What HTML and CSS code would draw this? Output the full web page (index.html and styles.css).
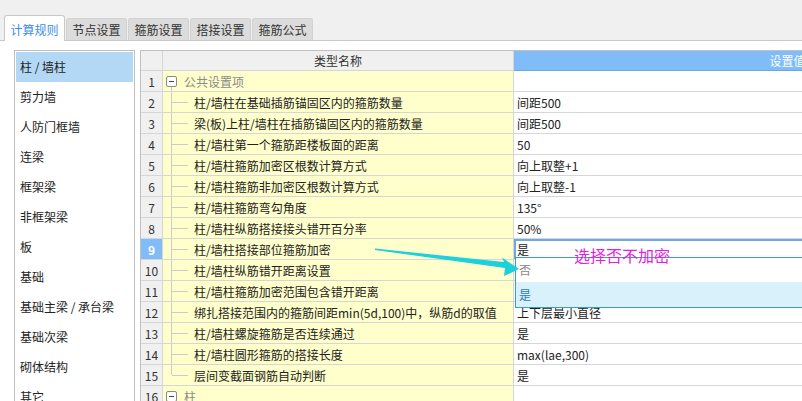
FILE: index.html
```html
<!DOCTYPE html>
<html lang="zh-CN">
<head>
<meta charset="utf-8">
<title>计算规则</title>
<link rel="stylesheet" href="styles.css">
</head>
<body>
<div class="tabs">
  <div class="tab active">计算规则</div>
  <div class="tab">节点设置</div>
  <div class="tab">箍筋设置</div>
  <div class="tab">搭接设置</div>
  <div class="tab">箍筋公式</div>
</div>
<div class="panel">
  <ul class="side">
    <li class="sel">柱 / 墙柱</li>
    <li>剪力墙</li>
    <li>人防门框墙</li>
    <li>连梁</li>
    <li>框架梁</li>
    <li>非框架梁</li>
    <li>板</li>
    <li>基础</li>
    <li>基础主梁 / 承台梁</li>
    <li>基础次梁</li>
    <li>砌体结构</li>
    <li>其它</li>
  </ul>
  <div class="grid">
    <div class="row head"><div class="c num"></div><div class="c name">类型名称</div><div class="c val">设置值</div></div>
    <div class="row"><div class="c num">1</div><div class="c name group first"><span class="box"></span><span class="gtext">公共设置项</span></div><div class="c val"></div></div>
    <div class="row"><div class="c num">2</div><div class="c name"><span class="br"></span>柱/墙柱在基础插筋锚固区内的箍筋数量</div><div class="c val">间距500</div></div>
    <div class="row"><div class="c num">3</div><div class="c name"><span class="br"></span>梁(板)上柱/墙柱在插筋锚固区内的箍筋数量</div><div class="c val">间距500</div></div>
    <div class="row"><div class="c num">4</div><div class="c name"><span class="br"></span>柱/墙柱第一个箍筋距楼板面的距离</div><div class="c val">50</div></div>
    <div class="row"><div class="c num">5</div><div class="c name"><span class="br"></span>柱/墙柱箍筋加密区根数计算方式</div><div class="c val">向上取整+1</div></div>
    <div class="row"><div class="c num">6</div><div class="c name"><span class="br"></span>柱/墙柱箍筋非加密区根数计算方式</div><div class="c val">向上取整-1</div></div>
    <div class="row"><div class="c num">7</div><div class="c name"><span class="br"></span>柱/墙柱箍筋弯勾角度</div><div class="c val">135°</div></div>
    <div class="row"><div class="c num">8</div><div class="c name"><span class="br"></span>柱/墙柱纵筋搭接接头错开百分率</div><div class="c val">50%</div></div>
    <div class="row"><div class="c num cur">9</div><div class="c name"><span class="br"></span>柱/墙柱搭接部位箍筋加密</div><div class="c val editing">是
      <div class="dd"><div class="opt no">否</div><div class="opt yes">是</div></div></div></div>
    <div class="row"><div class="c num">10</div><div class="c name"><span class="br"></span>柱/墙柱纵筋错开距离设置</div><div class="c val"></div></div>
    <div class="row"><div class="c num">11</div><div class="c name"><span class="br"></span>柱/墙柱箍筋加密范围包含错开距离</div><div class="c val"></div></div>
    <div class="row"><div class="c num">12</div><div class="c name"><span class="br"></span>绑扎搭接范围内的箍筋间距min(5d,100)中，纵筋d的取值</div><div class="c val">上下层最小直径</div></div>
    <div class="row"><div class="c num">13</div><div class="c name"><span class="br"></span>柱/墙柱螺旋箍筋是否连续通过</div><div class="c val">是</div></div>
    <div class="row"><div class="c num">14</div><div class="c name"><span class="br"></span>柱/墙柱圆形箍筋的搭接长度</div><div class="c val">max(lae,300)</div></div>
    <div class="row"><div class="c num">15</div><div class="c name"><span class="br last"></span>层间变截面钢筋自动判断</div><div class="c val">是</div></div>
    <div class="row"><div class="c num">16</div><div class="c name group"><span class="box"></span><span class="gtext">柱</span></div><div class="c val"></div></div>
  </div>
</div>
<div class="note">选择否不加密</div>
<svg class="arrow" width="802" height="401" viewBox="0 0 802 401">
  <polygon points="375,248.5 504,262 502,257.5 519,269 504,276 505,268 375,250" fill="#1cd0dc"/>
</svg>
</body>
</html>
```
FILE: styles.css
```css
html, body {
  margin: 0;
  padding: 0;
  overflow: hidden;
}
body {
  width: 802px;
  height: 401px;
  position: relative;
  background: #f0f0f0;
  font-family: "Noto Sans CJK SC", "Microsoft YaHei", sans-serif;
  font-size: 12px;
  color: #222;
}
.tabs {
  display: flex;
  align-items: flex-end;
  gap: 1px;
  padding: 15px 0 0 4px;
  height: 25px;
}
.tab {
  width: 61px;
  height: 22px;
  box-sizing: border-box;
  background: #dcdcdc;
  border: 1px solid #d2d2d2;
  border-bottom: none;
  border-radius: 3px 3px 0 0;
  display: flex;
  align-items: center;
  justify-content: center;
  color: #333;
  flex: none;
}
.tab.active {
  height: 26px;
  padding-top: 1px;
  background: #fff;
  border-color: #c8c8c8;
  color: #3a8ee6;
  margin-bottom: -1px;
  position: relative;
  z-index: 1;
}
.panel {
  display: flex;
  gap: 5px;
  background: #fff;
  border-top: 1px solid #c8c8c8;
  padding: 9px 0 0 14px;
  height: 360px;
}
.side {
  flex: none;
  width: 121px;
  box-sizing: border-box;
  border: 1px solid #c0c0c0;
  border-bottom: none;
  padding: 1px;
  margin: 0;
  list-style: none;
}
.side li {
  height: 30px;
  line-height: 30px;
  padding-left: 4px;
  white-space: nowrap;
}
.side li.sel {
  background: #b3d8f5;
}
.grid {
  flex: none;
  width: 922px;
  border-top: 1px solid #c0c0c0;
  border-left: 1px solid #c0c0c0;
  align-self: flex-start;
}
.row {
  display: grid;
  grid-template-columns: 22px 351px 548px;
  height: 21px;
}
.c {
  box-sizing: border-box;
  border-right: 1px solid #d6d6d6;
  border-bottom: 1px solid #d6d6d6;
  display: flex;
  align-items: center;
  white-space: nowrap;
  overflow: visible;
}
.num {
  background: #f0f0f0;
  justify-content: center;
  color: #333;
}
.num.cur {
  background: #80bcf8;
  color: #fff;
  font-weight: bold;
}
.name {
  background: #ffffcc;
}
.val {
  background: #fff;
  padding-left: 3px;
}
.row.head {
  height: 20px;
}
.head .name {
  background: #f0f0f0;
  justify-content: center;
  color: #333;
}
.head .val {
  background: #80bcf8;
  border-bottom-color: #6aa6e4;
  color: #fff;
  justify-content: center;
  padding-left: 0;
}
.group {
  padding-left: 3px;
}
.group.first {
  background: linear-gradient(#c8c8c8, #c8c8c8) 8px 100% / 1px 4px no-repeat, #ffffcc;
}
.box {
  flex: none;
  width: 11px;
  height: 11px;
  box-sizing: border-box;
  border: 1px solid #8a8a8a;
  border-radius: 2px;
  background: linear-gradient(#444, #444) center / 5px 1px no-repeat, #fff;
}
.gtext {
  margin-left: 7px;
  color: #8a8a8a;
}
.br {
  flex: none;
  width: 31px;
  align-self: stretch;
  background:
    linear-gradient(#cccccc, #cccccc) 8px 0 / 1px 100% no-repeat,
    linear-gradient(#cccccc, #cccccc) 9px 50% / 16px 1px no-repeat;
}
.br.last {
  background:
    linear-gradient(#cccccc, #cccccc) 8px 0 / 1px 50% no-repeat,
    linear-gradient(#cccccc, #cccccc) 9px 50% / 16px 1px no-repeat;
}
.editing {
  position: relative;
  box-shadow: inset 0 0 0 2px #6ea9e6;
}
.dd {
  position: absolute;
  left: 1px;
  top: 18px;
  width: 320px;
  border: 1px solid #3a9ad9;
  background: #fff;
  z-index: 2;
}
.opt {
  height: 24px;
  line-height: 24px;
  padding-left: 3px;
}
.opt.no {
  color: #8a8a8a;
}
.opt.yes {
  height: 25px;
  line-height: 25px;
  background: #d9f1fa;
  color: #2a78c8;
}
.note {
  position: absolute;
  left: 574px;
  top: 245px;
  font-size: 16px;
  line-height: 20px;
  color: #e31ee3;
  z-index: 3;
}
.arrow {
  position: absolute;
  left: 0;
  top: 0;
  pointer-events: none;
  z-index: 4;
}
```
